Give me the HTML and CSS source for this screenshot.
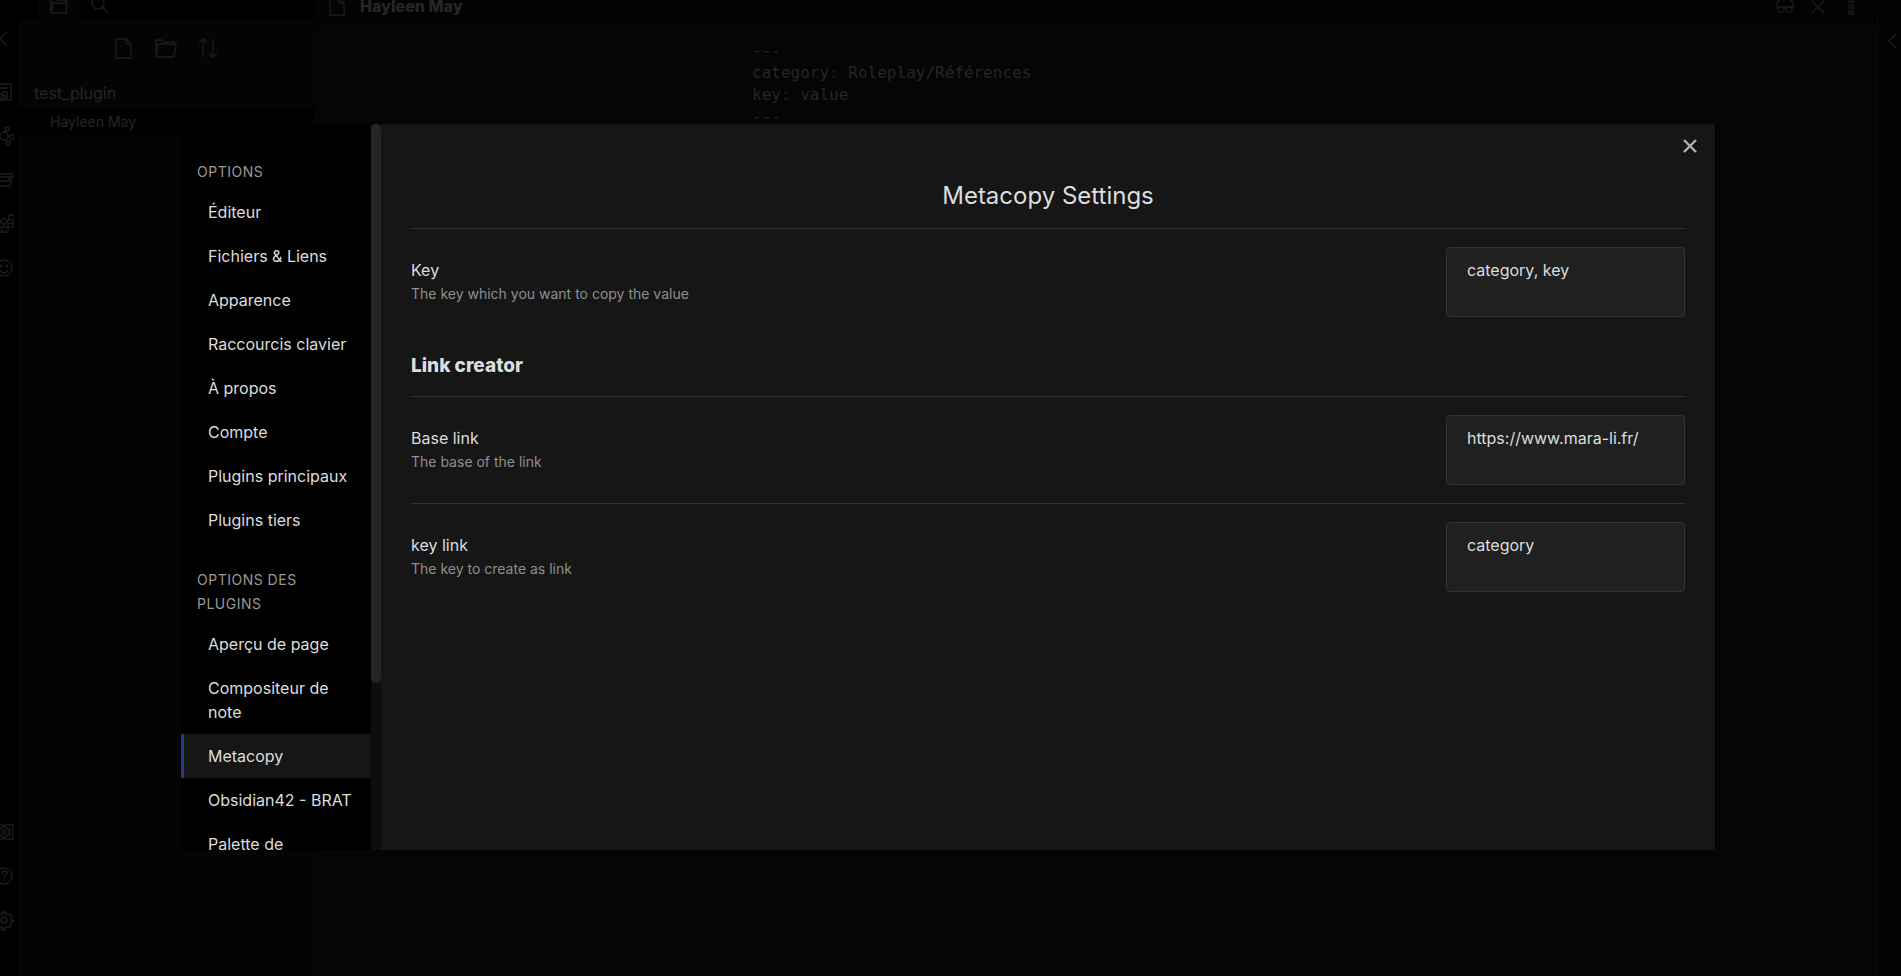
FILE: index.html
```html
<!DOCTYPE html>
<html lang="fr">
<head>
<meta charset="utf-8">
<title>Metacopy Settings</title>
<link rel="stylesheet" href="styles.css">
</head>
<body>
<div class="app">
  <nav class="ribbon" aria-label="Ruban">
    <svg class="icon chevron" viewBox="0 0 8 16"><path d="M7 1 0 8l7 7"/></svg>
    <div class="ribbon-group">
      <svg class="icon" viewBox="0 0 24 24"><path d="M2 4h19v16H2zM5 8h13M5 12h3v4H5zM13 12h4v4h-4zM9 14h3M5 18h13"/></svg>
      <svg class="icon" viewBox="0 0 24 24"><circle cx="14" cy="12" r="4"/><circle cx="17" cy="5" r="2"/><circle cx="22" cy="13" r="2"/><circle cx="18" cy="19" r="2"/><circle cx="5" cy="14" r="2"/><path d="m15 8 1-1M18 12h2M16 15l1 2M10 13H7"/></svg>
      <svg class="icon" viewBox="0 0 24 24"><path d="M2 6h21v3H2M22 9l-2 9H3M8 9v4h11V9"/></svg>
      <svg class="icon" viewBox="0 0 24 24"><path d="m10 9 4-3 4 3-4 4zM19 3h5v5h-5zM18 12l5-2v5l-5 1zM7 15h5v5H7zM12 15h6v5h-6zM7 15v-4h4"/></svg>
      <svg class="icon" viewBox="0 0 24 24"><circle cx="14" cy="12" r="8"/><circle cx="11" cy="10" r="1"/><circle cx="17" cy="10" r="1"/><path d="M10 14c2 4 6 4 8 0"/></svg>
    </div>
    <div class="ribbon-group ribbon-bottom">
      <svg class="icon" viewBox="0 0 24 24"><path d="M2 5h21v14H2zM20 7v10"/><circle cx="14" cy="12" r="5"/><circle cx="14" cy="12" r="2"/></svg>
      <svg class="icon" viewBox="0 0 24 24"><circle cx="14" cy="12" r="8"/><path d="M12 10c0-4 5-4 5-1 0 2-3 2-3 5M14 16v1"/></svg>
      <svg class="icon" viewBox="0 0 24 24"><circle cx="14" cy="12" r="3"/><path d="m13 6 0-2h3v2l2 1 2-1 2 2-2 2 1 2h2v2h-2l-1 2 1 2-2 2-2-1-2 1v2h-3v-2l-2-1-2 1-2-2 1-2-1-2H5v-3h2l1-2-1-2 2-2 2 1z"/></svg>
    </div>
  </nav>

  <aside class="explorer">
    <div class="tabs">
      <div class="tab tab-active"><svg class="icon tab-icon" viewBox="0 0 20 20"><path d="M2 18V3h6l1 2h8v3M2 18 4 8h14l-1 10z"/></svg></div>
      <div class="tab"><svg class="icon tab-icon" viewBox="0 0 20 20"><circle cx="8" cy="8" r="6"/><path d="m12 12 6 6"/></svg></div>
    </div>
    <div class="explorer-body">
      <div class="explorer-actions">
        <svg class="icon action" viewBox="0 0 24 24"><path d="M4 3h10l5 5v14H4zM14 3v5h5"/></svg>
        <svg class="icon action" viewBox="0 0 24 24"><path d="M2 21V4h6l1 2h11v3M2 21 4 8h18l-2 13z"/></svg>
        <svg class="icon action" viewBox="0 0 24 24"><path d="M7 21V3M3 7l4-4 4 4M17 3v18M13 17l4 4 4-4"/></svg>
      </div>
      <div class="vault">test_plugin</div>
      <div class="file">Hayleen May</div>
    </div>
  </aside>

  <main class="note">
    <header class="note-header">
      <svg class="icon note-icon" viewBox="0 0 20 20"><path d="M3 2h9l5 5v12H3zM12 2v5h5"/></svg>
      <span class="note-title">Hayleen May</span>
      <svg class="icon note-icon" viewBox="0 0 20 20"><path d="M5 4C3 4 2 7 2 11h16c0-4-1-7-3-7M3 11c-1 7 6 7 6 2v-2M17 11c1 7-6 7-6 2v-2"/></svg>
      <svg class="icon note-icon" viewBox="0 0 20 20"><path d="m4 5 12 12M16 5 4 17"/></svg>
      <svg class="icon note-icon" viewBox="0 0 20 20"><path d="M8 3h4v3H8zM8 9h4v3H8zM8 15h4v3H8z"/></svg>
    </header>
    <div class="source">
      <div class="fence">---</div>
      <div>category<span class="colon">:</span> Roleplay/Références</div>
      <div>key<span class="colon">:</span> value</div>
      <div class="fence">---</div>
    </div>
  </main>
  <div class="right-ribbon"><svg class="icon chevron" viewBox="0 0 8 16"><path d="M8 1 1 8l7 7"/></svg></div>
</div>

<div class="modal" role="dialog" aria-labelledby="settings-title">
  <nav class="menu" aria-label="Options">
    <h2 class="menu-title">Options</h2>
    <button class="menu-item">Éditeur</button>
    <button class="menu-item">Fichiers &amp; Liens</button>
    <button class="menu-item">Apparence</button>
    <button class="menu-item">Raccourcis clavier</button>
    <button class="menu-item">À propos</button>
    <button class="menu-item">Compte</button>
    <button class="menu-item">Plugins principaux</button>
    <button class="menu-item">Plugins tiers</button>
    <h2 class="menu-title">Options des plugins</h2>
    <button class="menu-item">Aperçu de page</button>
    <button class="menu-item">Compositeur de note</button>
    <button class="menu-item menu-item-active">Metacopy</button>
    <button class="menu-item">Obsidian42 - BRAT</button>
    <button class="menu-item">Palette de</button>
  </nav>
  <div class="scroll-track"><div class="scroll-thumb"></div></div>
  <section class="settings">
    <button class="close" aria-label="Fermer"><svg class="close-icon" viewBox="0 0 14 14"><path d="m1 1 12 12M13 1 1 13"/></svg></button>
    <h1 class="settings-title" id="settings-title">Metacopy Settings</h1>
    <div class="setting">
      <div class="setting-info">
        <label class="setting-name" for="key">Key</label>
        <div class="setting-desc">The key which you want to copy the value</div>
      </div>
      <textarea class="setting-input" id="key" spellcheck="false">category, key</textarea>
    </div>
    <h3 class="settings-heading">Link creator</h3>
    <div class="setting">
      <div class="setting-info">
        <label class="setting-name" for="base">Base link</label>
        <div class="setting-desc">The base of the link</div>
      </div>
      <textarea class="setting-input" id="base" spellcheck="false">https://www.mara-li.fr/</textarea>
    </div>
    <div class="setting">
      <div class="setting-info">
        <label class="setting-name" for="keylink">key link</label>
        <div class="setting-desc">The key to create as link</div>
      </div>
      <textarea class="setting-input" id="keylink" spellcheck="false">category</textarea>
    </div>
  </section>
</div>
</body>
</html>
```
FILE: styles.css
```css
* { box-sizing: border-box; }
body {
  margin: 0;
  height: 100vh;
  overflow: hidden;
  background: #000;
  color: #dcddde;
  font: 16px/24px Inter, sans-serif;
}
h1, h2, h3 { margin: 0; }
button { font: inherit; color: inherit; border: 0; background: none; cursor: pointer; }

.icon { fill: none; stroke: #1c1c1c; stroke-width: 1.4; flex: none; }
.chevron { width: 8px; height: 16px; }

/* Workspace */
.app { display: flex; height: 100%; color: #262626; }
.ribbon {
  width: 18px;
  flex: none;
  display: flex;
  flex-direction: column;
  align-items: flex-end;
  padding: 31px 10px 44px 0;
  overflow: hidden;
}
.ribbon-group { display: flex; flex-direction: column; gap: 20px; margin: 33px -6px 0 0; }
.ribbon-group .icon { width: 24px; height: 24px; }
.ribbon-bottom { margin-top: auto; }

.explorer { width: 296px; flex: none; display: flex; flex-direction: column; }
.tabs { display: flex; height: 19px; padding-left: 20px; }
.tab { width: 41px; display: flex; justify-content: center; align-items: flex-end; padding-bottom: 4px; }
.tab-active { background: #040404; }
.tab-icon { width: 20px; height: 20px; }
.explorer-body { flex: 1; background: #040404; border-radius: 6px 0 0 0; }
.explorer-actions { display: flex; justify-content: center; gap: 18px; padding: 17px 0 0; }
.action { width: 24px; height: 24px; }
.vault { padding: 21px 16px 2px; }
.file {
  height: 29px;
  padding-left: 32px;
  background: #010101;
  font-size: 14px;
  line-height: 30px;
}

.note { flex: 1; background: #050505; }
.note-header {
  display: flex;
  align-items: flex-end;
  gap: 13px;
  height: 25px;
  padding: 0 16px 7px 13px;
  background: #030303;
  border-bottom: 2px solid #000;
}
.note-icon { width: 20px; height: 20px; }
.note-title { flex: 1; font-weight: 800; line-height: 20px; }
.source {
  padding: 15px 0 0 438px;
  font: 16px/22px "DejaVu Sans Mono", monospace;
}
.fence { color: #2b241a; }
.colon { color: #17232a; }
.right-ribbon { width: 24px; flex: none; padding: 31px 0 0 10px; background: #030303; border-left: 1px solid #0a0a0a; }

/* Settings dialog */
.modal {
  position: absolute;
  top: 124px;
  right: 186px;
  bottom: 126px;
  left: 181px;
  display: flex;
  overflow: hidden;
  border-radius: 4px;
  background: #161616;
}
.menu { width: 190px; flex: none; padding-top: 10px; background: #000; overflow: hidden; }
.menu-title {
  padding: 26px 16px 6px;
  color: #999;
  font-size: 14px;
  font-weight: 400;
  letter-spacing: 0.5px;
  text-transform: uppercase;
}
.menu-item {
  display: block;
  width: 100%;
  padding: 10px 16px 10px 24px;
  border-left: 3px solid transparent;
  text-align: left;
}
.menu-item-active { background: #161616; border-left-color: #28388f; }
.scroll-track { width: 10px; flex: none; background: #0d0d0d; }
.scroll-thumb { height: 77%; border-radius: 5px; background: #252525; }

.settings { position: relative; flex: 1; padding: 54px 30px 30px; }
.close { position: absolute; top: 10px; right: 13px; width: 24px; height: 24px; padding: 5px; }
.close-icon { display: block; width: 14px; height: 14px; fill: none; stroke: #b0b0b0; stroke-width: 2.4; }
.settings-title { padding-bottom: 14px; font-size: 24px; font-weight: 400; line-height: 36px; text-align: center; }
.settings-heading { padding: 16px 0 15px; font-size: 19px; font-weight: 800; line-height: 30px; }
.setting {
  display: flex;
  align-items: center;
  justify-content: space-between;
  padding: 18px 0;
  border-top: 1px solid #333;
}
.setting-name { display: block; }
.setting-desc { color: #8f8f8f; font-size: 14px; line-height: 24px; }
.setting-input {
  display: block;
  width: 239px;
  height: 70px;
  padding: 10px 20px;
  border: 1px solid #333;
  border-radius: 4px;
  background: #202020;
  color: #dcddde;
  font: 16px/24px Inter, sans-serif;
  resize: none;
}
```
